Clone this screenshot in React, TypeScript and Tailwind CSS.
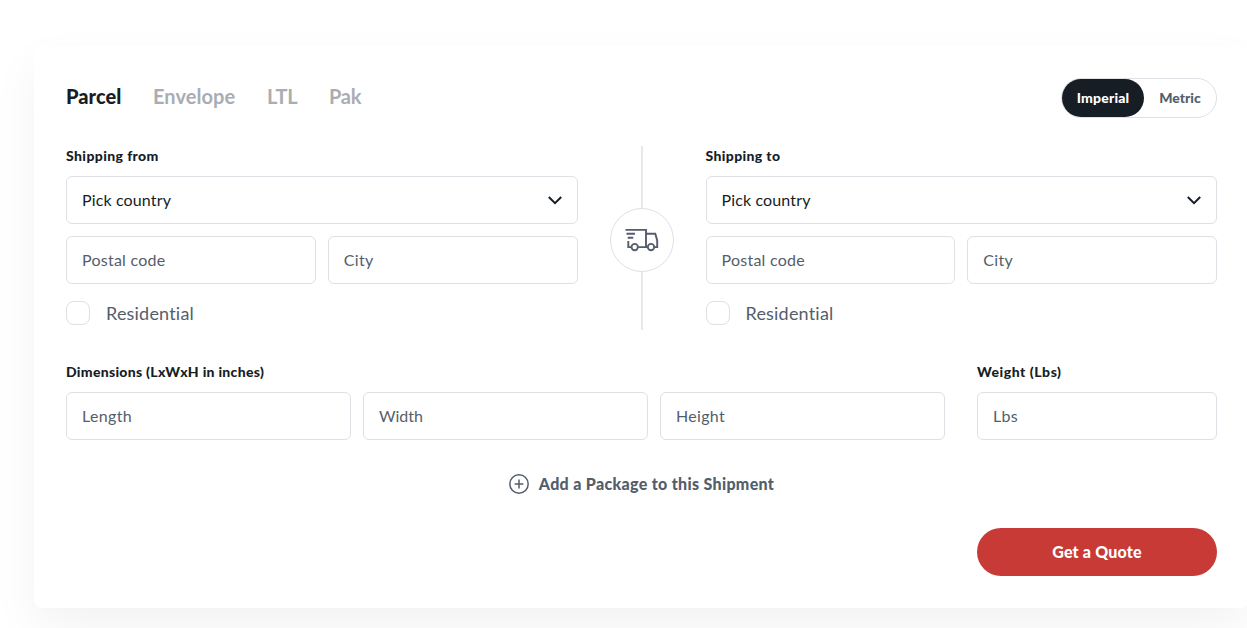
import React from "react";

const fieldClass =
  "h-12 w-full min-w-0 rounded-md border border-[#dfe0e5] bg-white px-[15px] pb-0.5 font-[Lato,sans-serif] text-base text-[#545e6b] outline-none placeholder:text-[#545e6b] placeholder:opacity-100";

function Field({ label, spacing }: { label: string; spacing: string }) {
  return <input type="text" aria-label={label} placeholder={label} className={`${fieldClass} ${spacing}`} />;
}

function Label({ children, spacing }: { children: string; spacing: string }) {
  return <div className={`h-5 text-sm leading-5 font-black whitespace-nowrap text-[#161d25] ${spacing}`}>{children}</div>;
}

function Address({ title, spacing }: { title: string; spacing: string }) {
  return (
    <section className="min-w-0 flex-1">
      <Label spacing={spacing}>{title}</Label>
      <button
        type="button"
        className="mt-[10px] flex h-12 w-full items-center justify-between rounded-md border border-[#dfe0e5] px-[15px] text-left text-base tracking-[0.14px] text-[#161d25]"
      >
        <span>Pick country</span>
        <svg width="14" height="9" viewBox="0 0 14 9" fill="none" stroke="#161d25" strokeWidth="2">
          <path d="M0.8 1 7 7.2 13.2 1" />
        </svg>
      </button>
      <div className="mt-3 grid grid-cols-2 gap-3">
        <Field label="Postal code" spacing="tracking-[0.25px]" />
        <Field label="City" spacing="tracking-[0.3px]" />
      </div>
      <label className="mt-[17px] flex h-6 items-center gap-4 text-lg tracking-[0.2px] text-[#545e6b]">
        <span className="size-6 rounded-lg border border-[#dfe0e5]" />
        Residential
      </label>
    </section>
  );
}

function Truck() {
  return (
    <svg width="34" height="24" viewBox="0 0 34 24" fill="none" stroke="#545e6b" strokeWidth="1.9">
      <path d="M0.5 1.9H21V19.1M1.5 5.8H10M2.7 9.8H8.3M3.3 13V19.1H6.2M13.2 19.1H22.5M29.4 19.1H32.2V12.5L30.3 5.8H21" />
      <circle cx="9.7" cy="19.1" r="3.2" />
      <circle cx="26" cy="19.1" r="3.2" />
    </svg>
  );
}

export default function App() {
  return (
    <main className="h-[628px] w-full overflow-hidden bg-white pt-[46px] pl-[34px] font-[Lato,sans-serif]">
      <div className="h-[562px] w-[1215px] rounded-lg bg-white p-8 shadow-[0_20px_48px_rgba(0,0,0,0.05)]">
        <header className="flex h-10 items-center justify-between">
          <nav className="flex h-10 items-center pb-1 text-xl font-bold text-[#a9adb3]">
            <button type="button" className="w-[87px] text-left font-black tracking-[0.05px] text-[#161d25]">Parcel</button>
            <button type="button" className="w-[114px] text-left tracking-[0.05px]">Envelope</button>
            <button type="button" className="w-[62px] text-left tracking-[-0.2px]">LTL</button>
            <button type="button" className="tracking-[-0.2px]">Pak</button>
          </nav>
          <div className="flex h-10 w-[156px] rounded-full border border-[#dfe0e5] text-sm font-black">
            <button type="button" className="w-[82px] rounded-full bg-[#161d25] tracking-[0.2px] text-white">Imperial</button>
            <button type="button" className="flex-1 text-[#545e6b]">Metric</button>
          </div>
        </header>

        <div className="mt-7 flex h-[184px]">
          <Address title="Shipping from" spacing="tracking-[0.4px]" />
          <div className="flex w-32 flex-col items-center">
            <div className="h-[62px] w-0.5 bg-[#e8e8eb]" />
            <div className="flex size-16 items-center justify-center rounded-full border border-[#dfe0e5]">
              <Truck />
            </div>
            <div className="h-[58px] w-0.5 bg-[#e8e8eb]" />
          </div>
          <Address title="Shipping to" spacing="tracking-[0.37px]" />
        </div>

        <div className="mt-8 flex gap-8">
          <section className="min-w-0 flex-1">
            <Label spacing="tracking-[0.3px]">Dimensions (LxWxH in inches)</Label>
            <div className="mt-[10px] grid grid-cols-3 gap-3">
              <Field label="Length" spacing="tracking-[0.35px]" />
              <Field label="Width" spacing="tracking-[0px]" />
              <Field label="Height" spacing="tracking-[0.3px]" />
            </div>
          </section>
          <section className="w-60">
            <Label spacing="tracking-[0.55px]">Weight (Lbs)</Label>
            <div className="mt-[10px]">
              <Field label="Lbs" spacing="tracking-[0.3px]" />
            </div>
          </section>
        </div>

        <div className="mt-[31px] flex h-[26px] justify-center">
          <button type="button" className="flex items-center gap-[10px] text-base font-black tracking-[0.32px] whitespace-nowrap text-[#545e6b]">
            <svg width="20" height="20" viewBox="0 0 20 20" fill="none" stroke="#545e6b" strokeWidth="1.5">
              <circle cx="10" cy="10" r="9.2" />
              <path d="M10 5.6V14.4M5.6 10H14.4" />
            </svg>
            <span>Add a Package to this Shipment</span>
          </button>
        </div>

        <div className="mt-[31px] flex justify-end">
          <button type="button" className="h-12 w-60 rounded-full bg-[#c73a36] text-base font-black tracking-[0.2px] text-white">Get a Quote</button>
        </div>
      </div>
    </main>
  );
}
